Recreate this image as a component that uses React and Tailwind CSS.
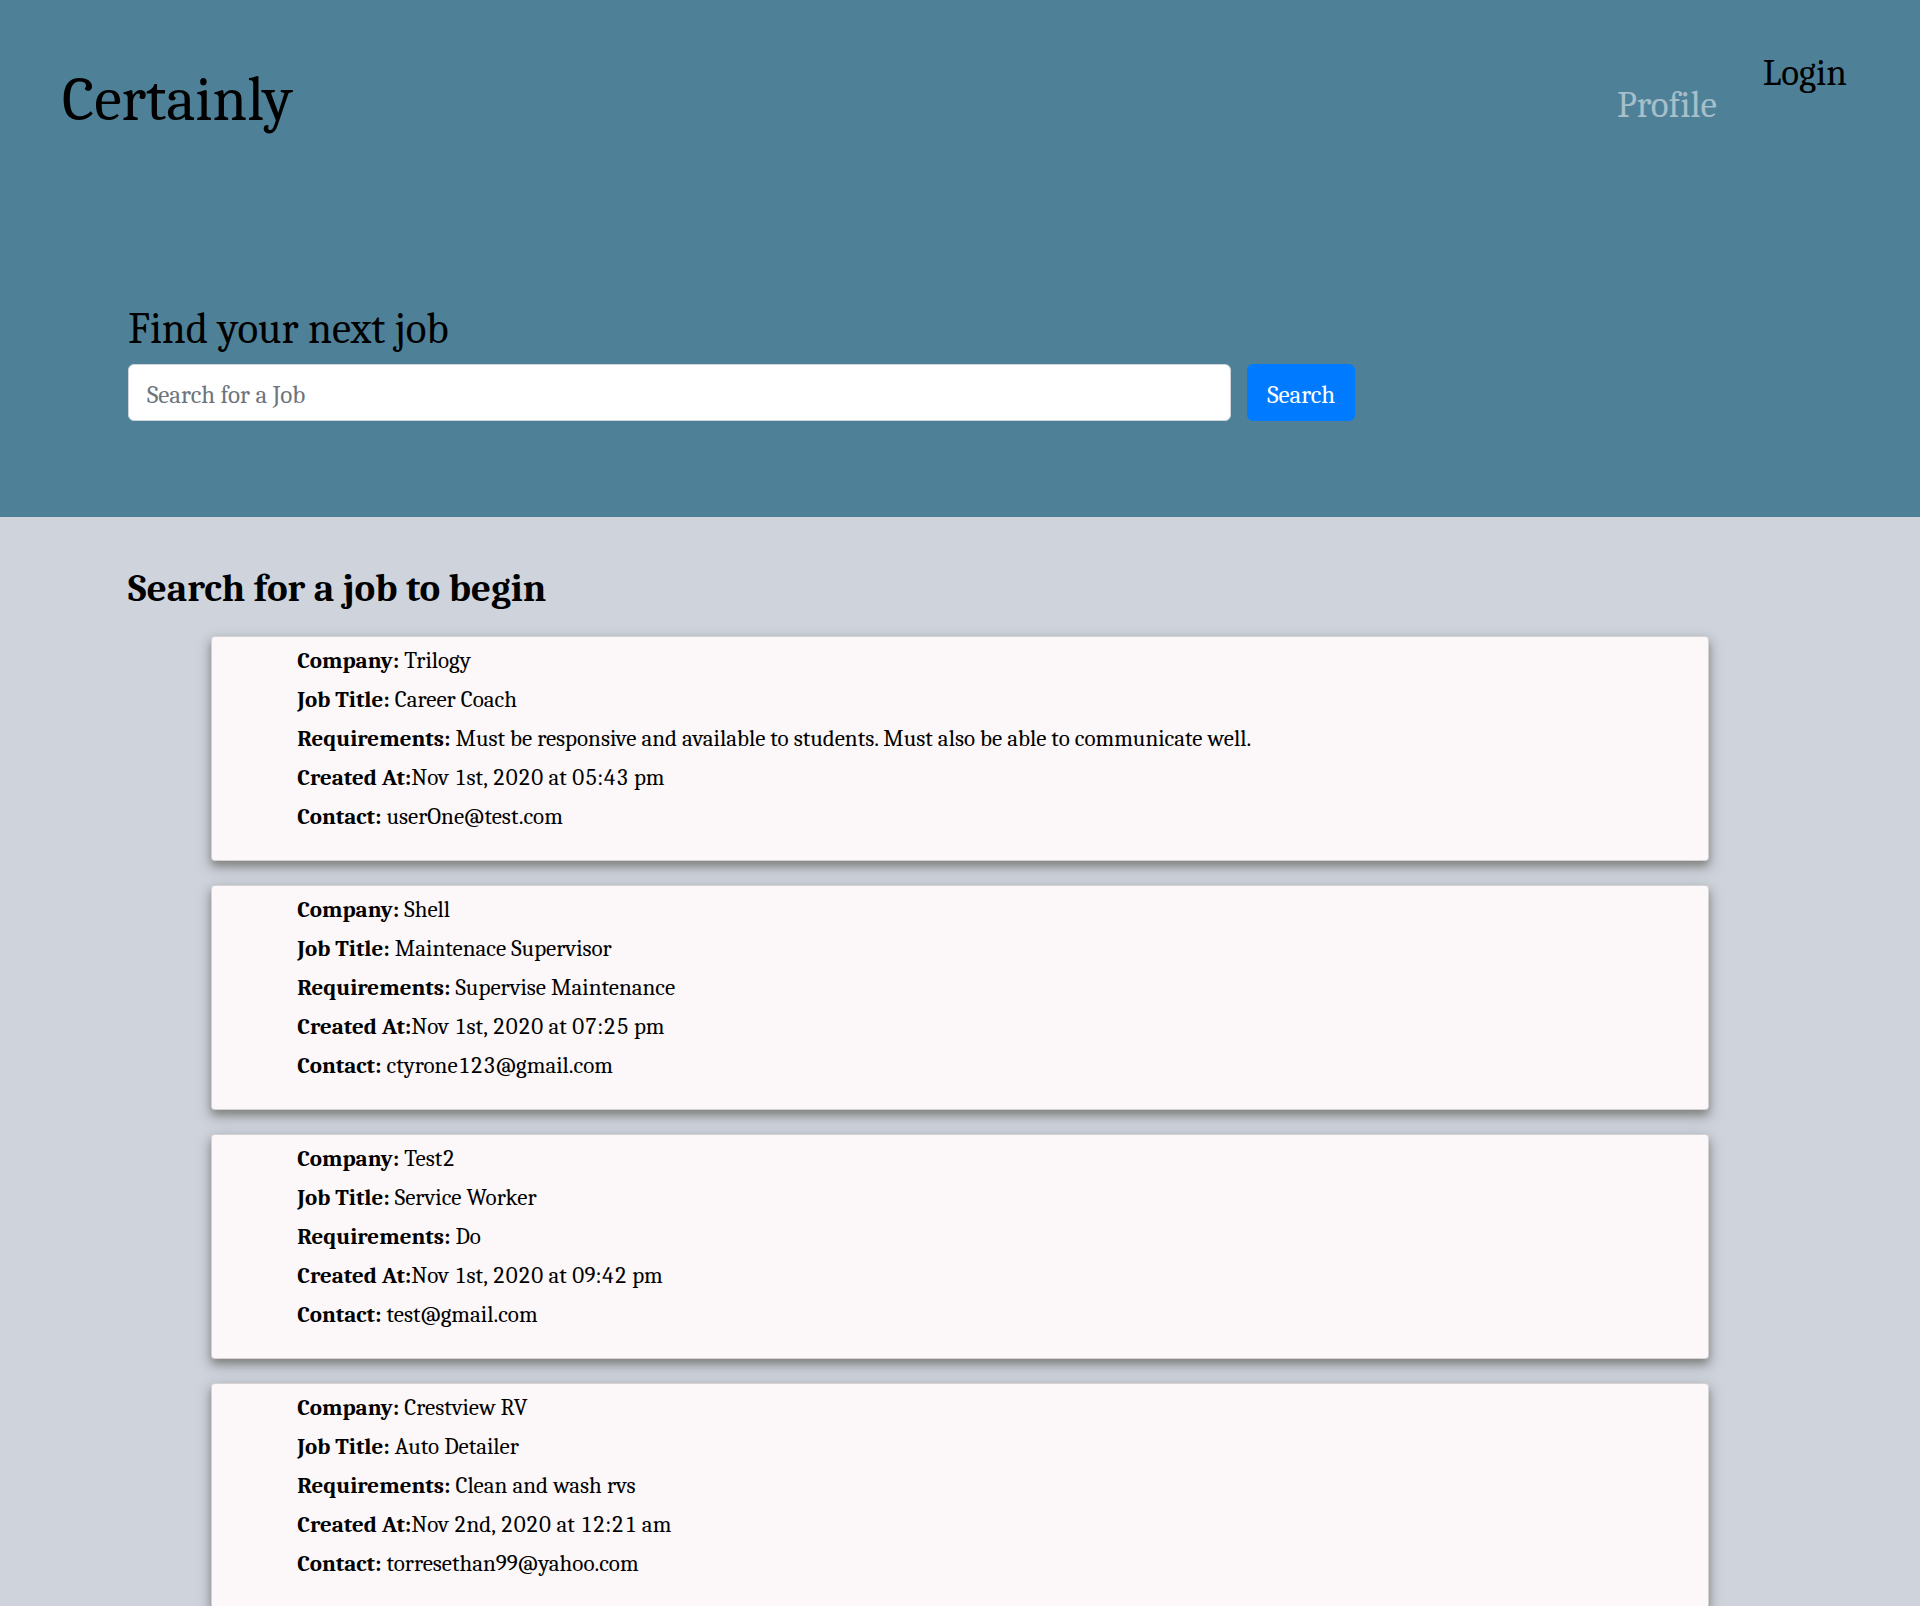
import React from "react";

const jobs = [
  {
    company: "Trilogy",
    title: "Career Coach",
    requirements:
      "Must be responsive and available to students. Must also be able to communicate well.",
    createdAt: "Nov 1st, 2020 at 05:43 pm",
    contact: "userOne@test.com",
  },
  {
    company: "Shell",
    title: "Maintenace Supervisor",
    requirements: "Supervise Maintenance",
    createdAt: "Nov 1st, 2020 at 07:25 pm",
    contact: "ctyrone123@gmail.com",
  },
  {
    company: "Test2",
    title: "Service Worker",
    requirements: "Do",
    createdAt: "Nov 1st, 2020 at 09:42 pm",
    contact: "test@gmail.com",
  },
  {
    company: "Crestview RV",
    title: "Auto Detailer",
    requirements: "Clean and wash rvs",
    createdAt: "Nov 2nd, 2020 at 12:21 am",
    contact: "torresethan99@yahoo.com",
  },
];

function JobCard({ job }) {
  return (
    <li className="rounded-sm border border-black/15 bg-[#fcf7f8] px-[85px] pt-1 pb-6 text-[23px]/[39px] tabular-nums shadow-[0_5px_8px_0_rgba(80,80,70,0.5),0_6px_16px_0_rgba(80,80,70,0.25)]">
      <p><strong>Company:</strong> {job.company}</p>
      <p><strong>Job Title:</strong> {job.title}</p>
      <p><strong>Requirements:</strong> {job.requirements}</p>
      <p><strong>Created At:</strong>{job.createdAt}</p>
      <p><strong>Contact:</strong> {job.contact}</p>
    </li>
  );
}

export default function App() {
  return (
    <div className="h-screen overflow-y-auto bg-[#ced3dc] font-['Caladea','Cambria','Liberation_Serif',serif] text-black [scrollbar-width:none]">
      <header className="bg-[#4e8098] pb-24">
        <nav className="flex items-start justify-between pt-12 pr-[73px] pl-[62px]">
          <a href="#home" className="pt-2 text-[62px]/[88px]">Certainly</a>
          <div className="flex items-start gap-[46px] text-[37px]/[50px]">
            <a href="#profile" className="pt-8 text-white/50">Profile</a>
            <a href="#login">Login</a>
          </div>
        </nav>
        <form className="mx-32 pt-[157px]" onSubmit={(e) => e.preventDefault()}>
          <label htmlFor="job-search" className="block text-[43px]/[56px]">Find your next job</label>
          <div className="mt-[7px] flex gap-4">
            <input
              id="job-search"
              type="text"
              placeholder="Search for a Job"
              className="h-[57px] w-[66.3%] rounded-md border border-[#ced4da] bg-white px-[18px] pt-1 text-[25px] placeholder:text-[#6c757d]"
            />
            <button type="submit" className="h-[57px] rounded-md bg-[#007bff] px-5 pt-1 text-[25px] text-white">Search</button>
          </div>
        </form>
      </header>
      <main className="mx-32 pt-12">
        <h1 className="text-[39px]/[48px] font-bold">Search for a job to begin</h1>
        <ul className="mx-auto mt-[23px] flex w-[90%] flex-col gap-6">
          {jobs.map((job) => (
            <JobCard key={job.company} job={job} />
          ))}
        </ul>
      </main>
    </div>
  );
}
